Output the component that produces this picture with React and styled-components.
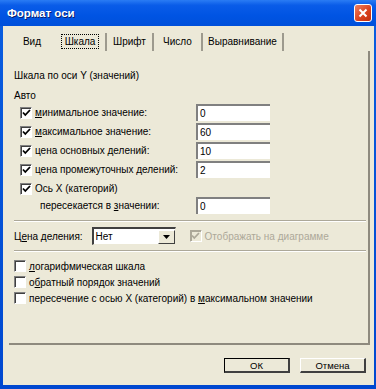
import React from "react";
import styled, { createGlobalStyle } from "styled-components";

const Global = createGlobalStyle`
  html, body { margin: 0; padding: 0; background: #ECE9D8; }
  body { font-family: "Liberation Sans", Arial, sans-serif; font-size: 10px; color: #000; }
`;

const Window = styled.div`
  width: 376px;
  height: 389px;
  display: flex;
  flex-direction: column;
  background: linear-gradient(#0A5EE0, #0048D0);
  box-sizing: border-box;
`;

const TitleBar = styled.div`
  height: 26px;
  flex: none;
  display: flex;
  align-items: center;
  justify-content: space-between;
  padding: 0 4px 0 7px;
  background: linear-gradient(#2A7CF4 0%, #0A5CE8 20%, #0054E3 60%, #0050DA 100%);
`;

const Title = styled.div`
  color: #fff;
  font-weight: bold;
  font-size: 11.5px;
  text-shadow: 1px 1px 0 #0A1F6E;
`;

const CloseBtn = styled.div`
  width: 18px;
  height: 18px;
  box-sizing: border-box;
  border: 1px solid #fff;
  border-radius: 3px;
  background: linear-gradient(135deg, #F08060, #D8401C 60%, #C03010);
  display: flex;
  align-items: center;
  justify-content: center;
`;

const Body = styled.div`
  flex: 1;
  margin: 0 2px 4px 3px;
  background: #ECE9D8;
  display: flex;
  flex-direction: column;
  padding: 7px 0 0 6px;
`;

const Tabs = styled.div`
  display: flex;
  height: 18px;
`;

const Tab = styled.div`
  width: ${p => p.w}px;
  box-sizing: border-box;
  display: flex;
  align-items: center;
  justify-content: center;
  border-right: ${p => (p.sep ? "2px solid #9D9A8E" : "none")};
  padding-bottom: 1px;
`;

const TabLabel = styled.span`
  padding: 0 3px;
  border: 1px dotted ${p => (p.focus ? "#000" : "transparent")};
  line-height: 13px;
`;

const Panel = styled.div`
  width: 361px;
  height: 294px;
  box-sizing: border-box;
  border-right: 2px solid #8E8A7E;
  border-bottom: 2px solid #8E8A7E;
  padding: 18px 0 0 5px;
  display: flex;
  flex-direction: column;
`;

const Heading = styled.div`
  height: 14px;
  line-height: 14px;
  margin-bottom: ${p => p.mb || 0}px;
`;

const Row = styled.div`
  height: ${p => p.h || 19}px;
  display: flex;
  align-items: center;
  padding-left: ${p => p.indent || 0}px;
  margin-top: ${p => p.mt || 0}px;
`;

const Label = styled.span`
  flex: ${p => (p.grow ? 1 : "none")};
  margin-left: ${p => p.ml || 0}px;
  color: ${p => (p.disabled ? "#ACA899" : "#000")};
  white-space: nowrap;
`;

const U = styled.span`
  text-decoration: underline;
`;

const Box = styled.div`
  width: 12px;
  height: 12px;
  box-sizing: border-box;
  flex: none;
  background: #fff;
  border-top: 1px solid #808080;
  border-left: 1px solid #808080;
  border-right: 1px solid #fff;
  border-bottom: 1px solid #fff;
  box-shadow: inset 1px 1px 0 #404040;
  display: flex;
  align-items: center;
  justify-content: center;
  margin-left: ${p => p.ml || 0}px;
  ${p => p.disabled && "background: #ECE9D8; box-shadow: inset 1px 1px 0 #ACA899; border-color: #ACA899 #fff #fff #ACA899;"}
`;

const Field = styled.div`
  width: 74px;
  height: 17px;
  box-sizing: border-box;
  background: #fff;
  border-top: 2px solid #808080;
  border-left: 2px solid #808080;
  padding: 1px 0 0 2px;
  line-height: 13px;
  margin-right: 98px;
  flex: none;
`;

const Separator = styled.div`
  height: 0;
  border-top: 1px solid #ACA899;
  border-bottom: 1px solid #fff;
  margin: ${p => p.m || "0"};
  width: 352px;
`;

const Select = styled.div`
  width: 84px;
  height: 18px;
  box-sizing: border-box;
  background: #fff;
  border-top: 2px solid #404040;
  border-left: 2px solid #404040;
  border-right: 1px solid #ECE9D8;
  border-bottom: 1px solid #ECE9D8;
  display: flex;
  align-items: center;
  justify-content: space-between;
  margin-left: 9px;
  padding-left: 2px;
`;

const Arrow = styled.div`
  width: 17px;
  height: 14px;
  box-sizing: border-box;
  background: #ECE9D8;
  border-right: 1px solid #404040;
  border-bottom: 1px solid #404040;
  border-top: 1px solid #fff;
  border-left: 1px solid #fff;
  display: flex;
  align-items: center;
  justify-content: center;
`;

const Footer = styled.div`
  display: flex;
  justify-content: flex-end;
  gap: 10px;
  padding: 13px 8px 0 0;
`;

const Button = styled.div`
  width: 66px;
  height: 15px;
  box-sizing: border-box;
  display: flex;
  align-items: center;
  justify-content: center;
  font-size: 9.5px;
  border: ${p => (p.def ? "1px solid #000" : "none")};
  border-bottom: 2px solid #404040;
  border-right: 2px solid #404040;
  ${p => !p.def && "border-top: 1px solid #fff; border-left: 1px solid #fff;"}
`;

const Check = ({ color = "#000" }) => (
  <svg width="9" height="8" viewBox="0 0 9 8">
    <path d="M1 3.5 L3.3 6 L8 1" stroke={color} strokeWidth="1.8" fill="none" />
  </svg>
);

const valueRows = [
  { label: <><U>м</U>инимальное значение:</>, value: "0" },
  { label: <><U>м</U>аксимальное значение:</>, value: "60" },
  { label: <>цена основных делений:</>, value: "10" },
  { label: <>цена промежуточных делений:</>, value: "2" },
];

const flags = [
  <><U>л</U>огарифмическая шкала</>,
  <>о<U>б</U>ратный порядок значений</>,
  <>пересечение с осью X (категорий) в <U>м</U>аксимальном значении</>,
];

export default function App() {
  return (
    <Window>
      <Global />
      <TitleBar>
        <Title>Формат оси</Title>
        <CloseBtn>
          <svg width="10" height="10" viewBox="0 0 10 10">
            <path d="M1.5 1.5 L8.5 8.5 M8.5 1.5 L1.5 8.5" stroke="#fff" strokeWidth="2" />
          </svg>
        </CloseBtn>
      </TitleBar>
      <Body>
        <Tabs>
          <Tab w={46}><TabLabel>Вид</TabLabel></Tab>
          <Tab w={52} sep><TabLabel focus>Шкала</TabLabel></Tab>
          <Tab w={47} sep><TabLabel>Шрифт</TabLabel></Tab>
          <Tab w={49} sep><TabLabel>Число</TabLabel></Tab>
          <Tab w={81} sep><TabLabel>Выравнивание</TabLabel></Tab>
        </Tabs>
        <Panel>
          <Heading mb={6}>Шкала по оси Y (значений)</Heading>
          <Heading>Авто</Heading>
          {valueRows.map((r, i) => (
            <Row key={i} indent={6}>
              <Box><Check /></Box>
              <Label grow ml={3}>{r.label}</Label>
              <Field>{r.value}</Field>
            </Row>
          ))}
          <Row indent={6}>
            <Box><Check /></Box>
            <Label grow ml={3}>Ось X (категорий)</Label>
          </Row>
          <Row indent={26} h={18} mt={-2}>
            <Label grow>пересекается в <U>з</U>начении:</Label>
            <Field>0</Field>
          </Row>
          <Separator m="6px 0 0 0" />
          <Row h={22} mt={3}>
            <Label>Ц<U>е</U>на деления:</Label>
            <Select>
              <span>Нет</span>
              <Arrow>
                <svg width="7" height="4" viewBox="0 0 7 4"><path d="M0 0 H7 L3.5 4 Z" fill="#000" /></svg>
              </Arrow>
            </Select>
            <Box disabled ml={14}><Check color="#ACA899" /></Box>
            <Label disabled ml={3}>Отображать на диаграмме</Label>
          </Row>
          <Separator m="3px 0 6px 0" />
          {flags.map((f, i) => (
            <Row key={i} h={16}>
              <Box />
              <Label ml={3}>{f}</Label>
            </Row>
          ))}
        </Panel>
        <Footer>
          <Button def>ОК</Button>
          <Button>Отмена</Button>
        </Footer>
      </Body>
    </Window>
  );
}
